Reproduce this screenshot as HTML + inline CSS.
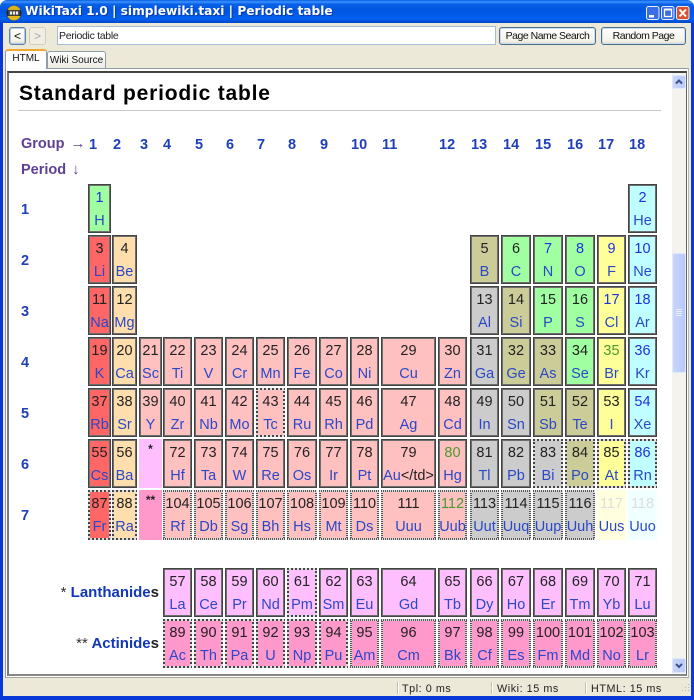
<!DOCTYPE html>
<html><head><meta charset="utf-8"><title>WikiTaxi</title>
<style>
html,body{margin:0;padding:0;background:#fff}
body{position:relative;width:694px;height:700px;overflow:hidden;font-family:"Liberation Sans",sans-serif}
.a{position:absolute}
#tb{left:0;top:0;width:694px;height:23px;border-radius:7px 7px 0 0;background:linear-gradient(#0a5fe0 0,#3a93ff 2px,#0a62e8 4px,#0055e0 10px,#0060f0 19px,#0048c8 23px)}
#title{left:25px;top:3px;color:#fff;font:bold 12.2px/17px "DejaVu Sans",sans-serif;white-space:nowrap;text-shadow:1px 1px 0 #0a3aa8}
#lb{left:0;top:23px;width:3px;height:677px;background:#0838d8}
#rb{left:691px;top:23px;width:3px;height:677px;background:#0838d8}
#bb{left:0;top:696px;width:694px;height:4px;background:#0838d8}
#bg{left:3px;top:23px;width:688px;height:673px;background:#ece9d8}
.b{box-sizing:border-box;border:1px solid #003c74;border-radius:3px;background:linear-gradient(#fff,#f4f2e8 80%,#dcd8c8);box-shadow:inset 0 0 0 1px #cfdcec;font:10.5px/16px "Liberation Sans",sans-serif;letter-spacing:-.5px;color:#111;text-align:center;white-space:nowrap}
#inp{left:57px;top:26px;width:439px;height:19px;box-sizing:border-box;border:1px solid #a5bcd4;background:#fff;font:10.5px/18px "Liberation Sans",sans-serif;letter-spacing:-.3px;color:#222;padding-left:1px}
.tab{box-sizing:border-box;font:10px/16px "Liberation Sans",sans-serif;color:#111;text-align:center;white-space:nowrap}
#pane{left:5px;top:68px;width:684px;height:610px;box-sizing:border-box;background:#fff;border:1px solid #8f9ca8;border-right-color:#b8b8b0;border-bottom-color:#a8a8a0}
#frame{left:7px;top:71px;width:680px;height:605px;box-sizing:border-box;background:#fff;border:1px solid #555;border-width:2px 1px 2px 2px;border-color:#444 #666 #888 #777}
#track{left:672px;top:73px;width:14px;height:601px;background:#f4f3ee}
.sb{left:672px;width:14px;box-sizing:border-box;border-radius:2px;background:linear-gradient(90deg,#c8d4fa,#bccdf8);border:1px solid #dfe8fc;color:#3a5090;text-align:center}
.st{font:10.8px/14px "Liberation Sans",sans-serif;color:#222;white-space:nowrap;letter-spacing:.55px;top:682px}
.sep{top:682px;width:1px;height:12px;background:#c4c1b0;box-shadow:1px 0 0 #fff}
h1{position:absolute;left:19px;top:80px;margin:0;font:bold 21px/28px "Liberation Sans",sans-serif;letter-spacing:.8px;color:#000;white-space:nowrap}
#hr{left:18px;top:110px;width:643px;height:1px;background:#c8c8c8}
.g{position:absolute;top:137px;font:bold 14.5px/16px "Liberation Sans",sans-serif;color:#1f3fb8;white-space:nowrap}
.p{position:absolute;left:21px;font:bold 14.5px/16px "Liberation Sans",sans-serif;color:#1f3fb8}
.lab{position:absolute;left:21px;font:bold 14.5px/16px "Liberation Sans",sans-serif;color:#5f3f96;white-space:nowrap}
.lab span{font-weight:normal;font-size:15px;margin-left:2px}
.ln{position:absolute;right:535px;font:bold 15px/16px "Liberation Sans",sans-serif;color:#1038b8;white-space:nowrap}
.ln b{color:#222}.ln u{text-decoration:none;color:#333;font-weight:normal}

.e{position:absolute;box-sizing:border-box;height:49px;border:2px solid #6e6e6e;outline:1px solid #444;outline-offset:-1px;font:14.5px/16px "Liberation Sans",sans-serif;text-align:center}
.e i{position:absolute;left:-3px;right:-3px;top:4px;font-style:normal;color:#222;white-space:nowrap}
.e a{position:absolute;left:-3px;right:-3px;top:27px;color:#2a48c8;white-space:nowrap}
.d,.o{border:2px solid transparent;outline:0;background-origin:border-box;background-repeat:no-repeat;background-size:100% 2px,100% 2px,2px 100%,2px 100%;background-position:0 0,0 100%,0 0,100% 0}
.d{background-image:repeating-linear-gradient(90deg,#444 0 2px,#ddd 2px 4px),repeating-linear-gradient(90deg,#444 0 2px,#ddd 2px 4px),repeating-linear-gradient(0deg,#444 0 2px,#ddd 2px 4px),repeating-linear-gradient(0deg,#444 0 2px,#ddd 2px 4px)}
.o{background-image:repeating-linear-gradient(90deg,#555 0 1px,#ddd 1px 2px),repeating-linear-gradient(90deg,#555 0 1px,#ddd 1px 2px),repeating-linear-gradient(0deg,#555 0 1px,#ddd 1px 2px),repeating-linear-gradient(0deg,#555 0 1px,#ddd 1px 2px)}
.none{border:0;outline:0}
.none i{top:2px;color:#222;font-weight:bold;font-size:12px}
.b1 i{color:#2030e0}.gr i{color:#4a9a30}.lg i{color:#ddd}
.r1{top:184px}.r2{top:235px}.r3{top:286px}.r4{top:337px}.r5{top:388px}.r6{top:439px}.r7{top:490px;height:50px}.r8{top:568px}.r9{top:619px}
.c1{left:88px;width:23px}.c2{left:112px;width:25px}.c3{left:139px;width:23px}.c4{left:163px;width:29px}.c5{left:194px;width:29px}.c6{left:225px;width:29px}.c7{left:256px;width:29px}.c8{left:287px;width:30px}.c9{left:319px;width:29px}.c10{left:350px;width:29px}.c11{left:381px;width:55px}.c12{left:438px;width:29px}.c13{left:470px;width:29px}.c14{left:501px;width:30px}.c15{left:533px;width:30px}.c16{left:565px;width:30px}.c17{left:597px;width:29px}.c18{left:628px;width:29px}
.alk{background-color:#ff6666}.ear{background-color:#ffdead}.tr{background-color:#ffc0c0}.la{background-color:#ffbfff}.ac{background-color:#ff99cc}.nm{background-color:#a0ffa0}.ha{background-color:#ffff99}.no{background-color:#c0ffff}.pm{background-color:#cccccc}.md{background-color:#cccc99}
.pale1{background-color:#ffffe0}.pale2{background-color:#f0ffff}
</style></head><body>
<div class="a" id="tb"></div>
<svg class="a" style="left:6px;top:5px" width="16" height="16" viewBox="0 0 16 16"><circle cx="8" cy="8" r="7.5" fill="#2a2a1a"/><path d="M1.5 5a7 7 0 0 1 13 0z" fill="#d8b020"/><path d="M1.5 11a7 7 0 0 0 13 0z" fill="#e0b818"/><rect x="2.5" y="5.5" width="11" height="5" fill="#555"/><rect x="4" y="6.5" width="2" height="3" fill="#eee"/><rect x="7" y="6.5" width="2" height="3" fill="#eee"/><rect x="10" y="6.5" width="2" height="3" fill="#eee"/></svg>
<div class="a" id="title">WikiTaxi 1.0 | simplewiki.taxi | Periodic table</div>

<svg class="a" style="left:646px;top:6px" width="44" height="14" viewBox="0 0 44 14">
<rect x=".5" y=".5" width="12.5" height="13" rx="2" fill="#3a6ce8" stroke="#e8eeff"/><rect x="3" y="9" width="5" height="2.5" fill="#fff"/>
<rect x="15.5" y=".5" width="12.5" height="13" rx="2" fill="#3a6ce8" stroke="#e8eeff"/><rect x="18.5" y="3.5" width="7" height="7" fill="none" stroke="#fff" stroke-width="1.3"/><path d="M18.5 3.5h7" stroke="#fff" stroke-width="2"/>
<rect x="30.5" y=".5" width="12.5" height="13" rx="2" fill="#dd5030" stroke="#f4e8e0"/><path d="M33.5 3.5l6.5 7M40 3.5l-6.5 7" stroke="#fff" stroke-width="2"/>
</svg>
<div class="a" id="bg"></div><div class="a" id="lb"></div><div class="a" id="rb"></div><div class="a" id="bb"></div>

<div class="a b" style="left:9px;top:27px;width:17px;height:18px;border-color:#5a84a8;box-shadow:inset 0 0 0 1px #b4cce0;font-size:12px;letter-spacing:0">&lt;</div>
<div class="a b" style="left:29px;top:27px;width:17px;height:18px;border-color:#cfccbc;color:#aaa;box-shadow:none;background:#f0eee2;font-size:12px;letter-spacing:0">&gt;</div>
<div class="a" id="inp">Periodic table</div>
<div class="a b" style="left:499px;top:27px;width:97px;height:18px;border-color:#4a7090">Page Name Search</div>
<div class="a b" style="left:601px;top:27px;width:85px;height:18px;border-color:#4a7090">Random Page</div>

<div class="a" id="pane"></div>
<div class="a tab" style="left:47px;top:51px;width:59px;height:18px;border:1px solid #8f9ca8;border-radius:3px 3px 0 0;background:linear-gradient(#fff,#ecebe4);line-height:17px">Wiki Source</div>
<div class="a tab" style="left:5px;top:49px;width:42px;height:20px;background:#fff;border:1px solid #8f9ca8;border-top:2px solid #f0a830;border-bottom:0;border-radius:3px 3px 0 0;line-height:16px">HTML</div>
<div class="a" id="frame"></div>
<div class="a" id="track"></div>
<div class="a sb" style="top:75px;height:14px"><svg width="12" height="12" style="display:block"><path d="M3 7.5l3-3 3 3" fill="none" stroke="#3a5090" stroke-width="2"/></svg></div>
<div class="a sb" style="top:253px;height:120px;background:linear-gradient(90deg,#c9d6fb,#b8caf8)"><svg width="12" height="10" style="position:absolute;left:0;top:54px"><path d="M3 1.5h6M3 3.5h6M3 5.5h6M3 7.5h6" stroke="#e8eeff"/></svg></div>
<div class="a sb" style="top:658px;height:15px"><svg width="12" height="13" style="display:block"><path d="M3 5l3 3 3-3" fill="none" stroke="#3a5090" stroke-width="2"/></svg></div>

<h1>Standard periodic table</h1>
<div class="a" id="hr"></div>

<div class="lab" style="top:136px">Group <span>→</span></div>
<div class="lab" style="top:162px">Period <span>↓</span></div>
<div class="g" style="left:89px">1</div><div class="g" style="left:113px">2</div><div class="g" style="left:140px">3</div><div class="g" style="left:163px">4</div><div class="g" style="left:195px">5</div><div class="g" style="left:226px">6</div><div class="g" style="left:257px">7</div><div class="g" style="left:288px">8</div><div class="g" style="left:320px">9</div><div class="g" style="left:351px">10</div><div class="g" style="left:382px">11</div><div class="g" style="left:439px">12</div><div class="g" style="left:471px">13</div><div class="g" style="left:503px">14</div><div class="g" style="left:535px">15</div><div class="g" style="left:567px">16</div><div class="g" style="left:598px">17</div><div class="g" style="left:629px">18</div>
<div class="p" style="top:202px">1</div><div class="p" style="top:253px">2</div><div class="p" style="top:304px">3</div><div class="p" style="top:355px">4</div><div class="p" style="top:406px">5</div><div class="p" style="top:457px">6</div><div class="p" style="top:508px">7</div>

<div class="e r1 c1 nm b1"><i>1</i><a>H</a></div>
<div class="e r1 c18 no b1"><i>2</i><a>He</a></div>

<div class="e r2 c1 alk"><i>3</i><a>Li</a></div>
<div class="e r2 c2 ear"><i>4</i><a>Be</a></div>
<div class="e r2 c13 md"><i>5</i><a>B</a></div>
<div class="e r2 c14 nm"><i>6</i><a>C</a></div>
<div class="e r2 c15 nm b1"><i>7</i><a>N</a></div>
<div class="e r2 c16 nm b1"><i>8</i><a>O</a></div>
<div class="e r2 c17 ha b1"><i>9</i><a>F</a></div>
<div class="e r2 c18 no b1"><i>10</i><a>Ne</a></div>

<div class="e r3 c1 alk"><i>11</i><a>Na</a></div>
<div class="e r3 c2 ear"><i>12</i><a>Mg</a></div>
<div class="e r3 c13 pm"><i>13</i><a>Al</a></div>
<div class="e r3 c14 md"><i>14</i><a>Si</a></div>
<div class="e r3 c15 nm"><i>15</i><a>P</a></div>
<div class="e r3 c16 nm"><i>16</i><a>S</a></div>
<div class="e r3 c17 ha b1"><i>17</i><a>Cl</a></div>
<div class="e r3 c18 no b1"><i>18</i><a>Ar</a></div>

<div class="e r4 c1 alk"><i>19</i><a>K</a></div>
<div class="e r4 c2 ear"><i>20</i><a>Ca</a></div>
<div class="e r4 c3 tr"><i>21</i><a>Sc</a></div>
<div class="e r4 c4 tr"><i>22</i><a>Ti</a></div>
<div class="e r4 c5 tr"><i>23</i><a>V</a></div>
<div class="e r4 c6 tr"><i>24</i><a>Cr</a></div>
<div class="e r4 c7 tr"><i>25</i><a>Mn</a></div>
<div class="e r4 c8 tr"><i>26</i><a>Fe</a></div>
<div class="e r4 c9 tr"><i>27</i><a>Co</a></div>
<div class="e r4 c10 tr"><i>28</i><a>Ni</a></div>
<div class="e r4 c11 tr"><i>29</i><a>Cu</a></div>
<div class="e r4 c12 tr"><i>30</i><a>Zn</a></div>
<div class="e r4 c13 pm"><i>31</i><a>Ga</a></div>
<div class="e r4 c14 md"><i>32</i><a>Ge</a></div>
<div class="e r4 c15 md"><i>33</i><a>As</a></div>
<div class="e r4 c16 nm"><i>34</i><a>Se</a></div>
<div class="e r4 c17 ha gr"><i>35</i><a>Br</a></div>
<div class="e r4 c18 no b1"><i>36</i><a>Kr</a></div>

<div class="e r5 c1 alk"><i>37</i><a>Rb</a></div>
<div class="e r5 c2 ear"><i>38</i><a>Sr</a></div>
<div class="e r5 c3 tr"><i>39</i><a>Y</a></div>
<div class="e r5 c4 tr"><i>40</i><a>Zr</a></div>
<div class="e r5 c5 tr"><i>41</i><a>Nb</a></div>
<div class="e r5 c6 tr"><i>42</i><a>Mo</a></div>
<div class="e r5 c7 tr d"><i>43</i><a>Tc</a></div>
<div class="e r5 c8 tr"><i>44</i><a>Ru</a></div>
<div class="e r5 c9 tr"><i>45</i><a>Rh</a></div>
<div class="e r5 c10 tr"><i>46</i><a>Pd</a></div>
<div class="e r5 c11 tr"><i>47</i><a>Ag</a></div>
<div class="e r5 c12 tr"><i>48</i><a>Cd</a></div>
<div class="e r5 c13 pm"><i>49</i><a>In</a></div>
<div class="e r5 c14 pm"><i>50</i><a>Sn</a></div>
<div class="e r5 c15 md"><i>51</i><a>Sb</a></div>
<div class="e r5 c16 md"><i>52</i><a>Te</a></div>
<div class="e r5 c17 ha"><i>53</i><a>I</a></div>
<div class="e r5 c18 no b1"><i>54</i><a>Xe</a></div>

<div class="e r6 c1 alk"><i>55</i><a>Cs</a></div>
<div class="e r6 c2 ear"><i>56</i><a>Ba</a></div>
<div class="e r6 c3 la none"><i>*</i></div>
<div class="e r6 c4 tr"><i>72</i><a>Hf</a></div>
<div class="e r6 c5 tr"><i>73</i><a>Ta</a></div>
<div class="e r6 c6 tr"><i>74</i><a>W</a></div>
<div class="e r6 c7 tr"><i>75</i><a>Re</a></div>
<div class="e r6 c8 tr"><i>76</i><a>Os</a></div>
<div class="e r6 c9 tr"><i>77</i><a>Ir</a></div>
<div class="e r6 c10 tr"><i>78</i><a>Pt</a></div>
<div class="e r6 c11 tr"><i>79</i><a>Au<span style="color:#222">&lt;/td&gt;</span></a></div>
<div class="e r6 c12 tr gr"><i>80</i><a>Hg</a></div>
<div class="e r6 c13 pm"><i>81</i><a>Tl</a></div>
<div class="e r6 c14 pm"><i>82</i><a>Pb</a></div>
<div class="e r6 c15 pm d"><i>83</i><a>Bi</a></div>
<div class="e r6 c16 md d"><i>84</i><a>Po</a></div>
<div class="e r6 c17 ha d"><i>85</i><a>At</a></div>
<div class="e r6 c18 no d b1"><i>86</i><a>Rn</a></div>

<div class="e r7 c1 alk d"><i>87</i><a>Fr</a></div>
<div class="e r7 c2 ear d"><i>88</i><a>Ra</a></div>
<div class="e r7 c3 ac none"><i>**</i></div>
<div class="e r7 c4 tr o"><i>104</i><a>Rf</a></div>
<div class="e r7 c5 tr o"><i>105</i><a>Db</a></div>
<div class="e r7 c6 tr o"><i>106</i><a>Sg</a></div>
<div class="e r7 c7 tr o"><i>107</i><a>Bh</a></div>
<div class="e r7 c8 tr o"><i>108</i><a>Hs</a></div>
<div class="e r7 c9 tr o"><i>109</i><a>Mt</a></div>
<div class="e r7 c10 tr o"><i>110</i><a>Ds</a></div>
<div class="e r7 c11 tr o"><i>111</i><a>Uuu</a></div>
<div class="e r7 c12 tr o gr"><i>112</i><a>Uub</a></div>
<div class="e r7 c13 pm o"><i>113</i><a>Uut</a></div>
<div class="e r7 c14 pm o"><i>114</i><a>Uuq</a></div>
<div class="e r7 c15 pm o"><i>115</i><a>Uup</a></div>
<div class="e r7 c16 pm o"><i>116</i><a>Uuh</a></div>
<div class="e r7 c17 pale1 none lg" style="border:2px solid #ffffe0"><i style="font-size:14.5px;font-weight:normal;top:4px">117</i><a>Uus</a></div>
<div class="e r7 c18 pale2 none lg" style="border:2px solid #f0ffff"><i style="font-size:14.5px;font-weight:normal;top:4px">118</i><a>Uuo</a></div>

<div class="ln" style="top:585px"><u>*</u> Lanthanide<b>s</b></div>
<div class="ln" style="top:636px"><u>**</u> Actinide<b>s</b></div>

<div class="e r8 c4 la"><i>57</i><a>La</a></div>
<div class="e r8 c5 la"><i>58</i><a>Ce</a></div>
<div class="e r8 c6 la"><i>59</i><a>Pr</a></div>
<div class="e r8 c7 la"><i>60</i><a>Nd</a></div>
<div class="e r8 c8 la d"><i>61</i><a>Pm</a></div>
<div class="e r8 c9 la"><i>62</i><a>Sm</a></div>
<div class="e r8 c10 la"><i>63</i><a>Eu</a></div>
<div class="e r8 c11 la"><i>64</i><a>Gd</a></div>
<div class="e r8 c12 la"><i>65</i><a>Tb</a></div>
<div class="e r8 c13 la"><i>66</i><a>Dy</a></div>
<div class="e r8 c14 la"><i>67</i><a>Ho</a></div>
<div class="e r8 c15 la"><i>68</i><a>Er</a></div>
<div class="e r8 c16 la"><i>69</i><a>Tm</a></div>
<div class="e r8 c17 la"><i>70</i><a>Yb</a></div>
<div class="e r8 c18 la"><i>71</i><a>Lu</a></div>

<div class="e r9 c4 ac d"><i>89</i><a>Ac</a></div>
<div class="e r9 c5 ac d"><i>90</i><a>Th</a></div>
<div class="e r9 c6 ac d"><i>91</i><a>Pa</a></div>
<div class="e r9 c7 ac d"><i>92</i><a>U</a></div>
<div class="e r9 c8 ac d"><i>93</i><a>Np</a></div>
<div class="e r9 c9 ac d"><i>94</i><a>Pu</a></div>
<div class="e r9 c10 ac o"><i>95</i><a>Am</a></div>
<div class="e r9 c11 ac o"><i>96</i><a>Cm</a></div>
<div class="e r9 c12 ac o"><i>97</i><a>Bk</a></div>
<div class="e r9 c13 ac o"><i>98</i><a>Cf</a></div>
<div class="e r9 c14 ac o"><i>99</i><a>Es</a></div>
<div class="e r9 c15 ac o"><i>100</i><a>Fm</a></div>
<div class="e r9 c16 ac o"><i>101</i><a>Md</a></div>
<div class="e r9 c17 ac o"><i>102</i><a>No</a></div>
<div class="e r9 c18 ac o"><i>103</i><a>Lr</a></div>

<div class="a sep" style="left:397px"></div><div class="a sep" style="left:491px"></div><div class="a sep" style="left:585px"></div>
<div class="a st" style="left:402px">Tpl: 0 ms</div>
<div class="a st" style="left:497px">Wiki: 15 ms</div>
<div class="a st" style="left:591px">HTML: 15 ms</div>
<svg class="a" style="left:679px;top:683px" width="11" height="11"><path d="M9 1h1v1H9zM6 4h1v1H6zM9 4h1v1H9zM3 7h1v1H3zM6 7h1v1H6zM9 7h1v1H9z" fill="#b8b5a4"/></svg>
</body></html>
